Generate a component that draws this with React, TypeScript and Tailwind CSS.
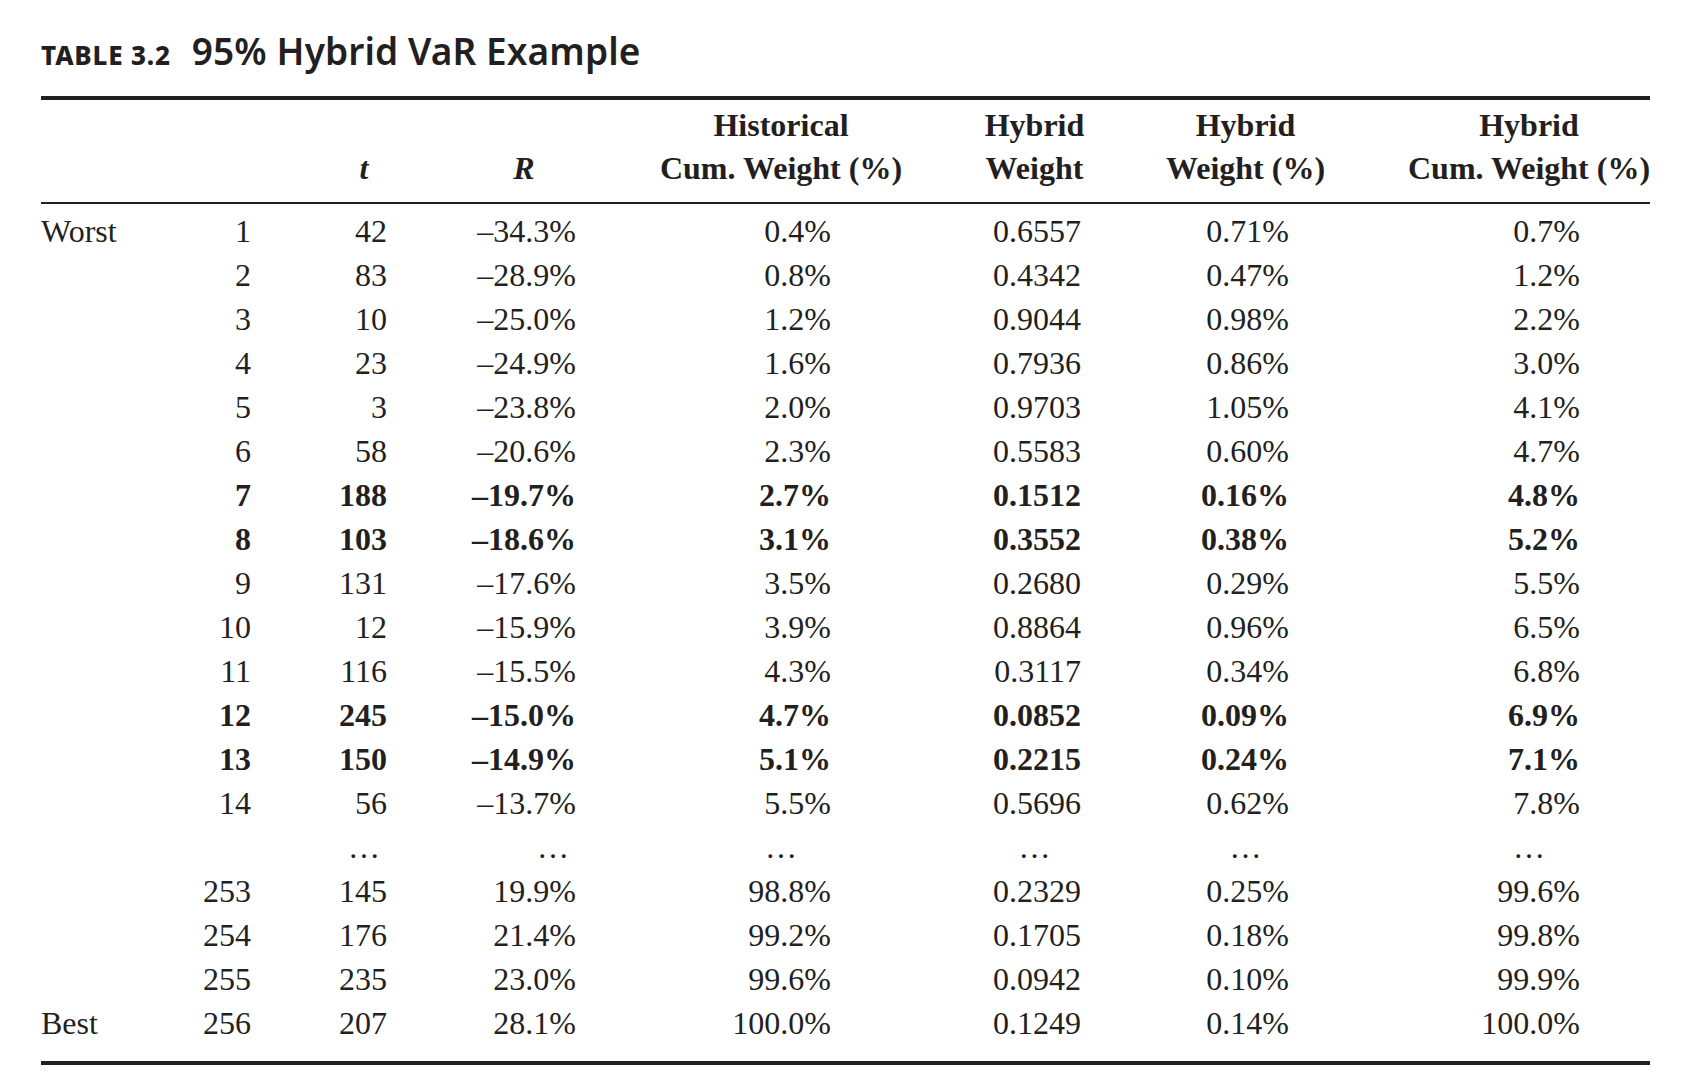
import React from "react";

type Row = [string, string, string, string, string, string, string, string, boolean];

const rows: Row[] = [
  ["Worst", "1", "42", "–34.3%", "0.4%", "0.6557", "0.71%", "0.7%", false],
  ["", "2", "83", "–28.9%", "0.8%", "0.4342", "0.47%", "1.2%", false],
  ["", "3", "10", "–25.0%", "1.2%", "0.9044", "0.98%", "2.2%", false],
  ["", "4", "23", "–24.9%", "1.6%", "0.7936", "0.86%", "3.0%", false],
  ["", "5", "3", "–23.8%", "2.0%", "0.9703", "1.05%", "4.1%", false],
  ["", "6", "58", "–20.6%", "2.3%", "0.5583", "0.60%", "4.7%", false],
  ["", "7", "188", "–19.7%", "2.7%", "0.1512", "0.16%", "4.8%", true],
  ["", "8", "103", "–18.6%", "3.1%", "0.3552", "0.38%", "5.2%", true],
  ["", "9", "131", "–17.6%", "3.5%", "0.2680", "0.29%", "5.5%", false],
  ["", "10", "12", "–15.9%", "3.9%", "0.8864", "0.96%", "6.5%", false],
  ["", "11", "116", "–15.5%", "4.3%", "0.3117", "0.34%", "6.8%", false],
  ["", "12", "245", "–15.0%", "4.7%", "0.0852", "0.09%", "6.9%", true],
  ["", "13", "150", "–14.9%", "5.1%", "0.2215", "0.24%", "7.1%", true],
  ["", "14", "56", "–13.7%", "5.5%", "0.5696", "0.62%", "7.8%", false],
];

const tail: Row[] = [
  ["", "253", "145", "19.9%", "98.8%", "0.2329", "0.25%", "99.6%", false],
  ["", "254", "176", "21.4%", "99.2%", "0.1705", "0.18%", "99.8%", false],
  ["", "255", "235", "23.0%", "99.6%", "0.0942", "0.10%", "99.9%", false],
  ["Best", "256", "207", "28.1%", "100.0%", "0.1249", "0.14%", "100.0%", false],
];

const grid =
  "grid grid-cols-[109px_102px_192px_160px_304px_253px_247px_242px]";

const dataCls = [
  "flex justify-start",
  "flex justify-end pr-[1px]",
  "flex justify-end pr-[57px]",
  "flex justify-end pr-[28px]",
  "flex justify-end pr-[77px]",
  "flex justify-end pr-[80px]",
  "flex justify-end pr-[119px]",
  "flex justify-end pr-[70px]",
];

const headCls = [
  "",
  "",
  "flex flex-col items-center pl-[32px]",
  "flex flex-col items-center",
  "flex flex-col items-center pl-[50px]",
  "flex flex-col items-center",
  "flex flex-col items-center pr-[78px]",
  "flex flex-col items-center",
];

const dotCls = [
  "",
  "",
  "flex justify-center pl-[32px]",
  "flex justify-center pl-[58px]",
  "flex justify-center pl-[50px]",
  "flex justify-center",
  "flex justify-center pr-[78px]",
  "flex justify-center",
];

function DataRow({ r }: { r: Row }) {
  const bold = r[8];
  return (
    <div className={`${grid} h-[44px] leading-[44px]`}>
      {r.slice(0, 8).map((v, i) => (
        <div
          key={i}
          className={`${dataCls[i]} whitespace-nowrap ${bold && i > 0 ? "font-bold" : "font-normal"}`}
        >
          <span>{v as string}</span>
        </div>
      ))}
    </div>
  );
}

export default function App() {
  return (
    <div className="w-[1688px] h-[1088px] bg-white text-[#231f20] overflow-hidden">
      <div className="pl-[41px] w-[1650px]">
        <div className="pt-[33px]">
          <div className="flex items-baseline h-[36px] leading-[36px] font-['Noto_Sans',sans-serif]">
            <span className="text-[26px] font-extrabold tracking-[0.8px]">TABLE 3.2</span>
            <span className="text-[37px] font-semibold ml-[21px] tracking-[0.1px]">95% Hybrid VaR Example</span>
          </div>
        </div>
        <div className="mt-[27px] h-[4px] bg-[#231f20]" />
        <div className="font-['Liberation_Serif',serif] text-[32px]">
          <div className={`${grid} mt-[4px] leading-[43px] font-bold whitespace-nowrap`}>
            <div className={headCls[0]} />
            <div className={headCls[1]} />
            <div className={headCls[2]}>
              <span>&nbsp;</span>
              <span className="italic">t</span>
            </div>
            <div className={headCls[3]}>
              <span>&nbsp;</span>
              <span className="italic">R</span>
            </div>
            <div className={headCls[4]}>
              <span>Historical</span>
              <span>Cum. Weight (%)</span>
            </div>
            <div className={headCls[5]}>
              <span>Hybrid</span>
              <span>Weight</span>
            </div>
            <div className={headCls[6]}>
              <span>Hybrid</span>
              <span>Weight (%)</span>
            </div>
            <div className={headCls[7]}>
              <span>Hybrid</span>
              <span>Cum. Weight (%)</span>
            </div>
          </div>
          <div className="mt-[12px] h-[2px] bg-[#231f20]" />
          <div className="mt-[5px]">
            {rows.map((r, i) => (
              <DataRow key={`a${i}`} r={r} />
            ))}
            <div className={`${grid} h-[44px] leading-[44px]`}>
              {dotCls.map((c, i) => (
                <div key={i} className={c}>
                  {i > 1 ? <span>…</span> : null}
                </div>
              ))}
            </div>
            {tail.map((r, i) => (
              <DataRow key={`b${i}`} r={r} />
            ))}
          </div>
          <div className="mt-[16px] h-[4px] bg-[#231f20]" />
        </div>
      </div>
    </div>
  );
}
